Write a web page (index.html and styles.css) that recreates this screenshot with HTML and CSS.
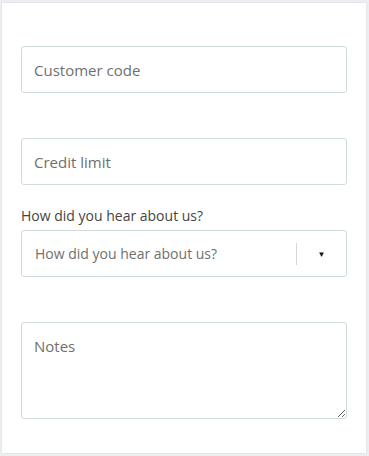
FILE: index.html
```html
<!DOCTYPE html>
<html lang="en">
<head>
    <meta charset="UTF-8">
    <meta name="viewport" content="width=device-width, initial-scale=1.0">
    <title>Customer form</title>
    <link rel="stylesheet" href="styles.css">
</head>
<body>
    <div class="card">
        <form class="customer-form">
            <div class="form-group">
                <label class="form-label" for="code"></label>
                <input class="form-control" type="text" id="code" placeholder="Customer code">
            </div>

            <div class="form-group">
                <label class="form-label" for="limit"></label>
                <input class="form-control" type="text" id="limit" placeholder="Credit limit">
            </div>

            <div class="form-group">
                <label class="form-label" for="source">How did you hear about us?</label>
                <div class="select" id="source">
                    <span class="select-value">How did you hear about us?</span>
                    <span class="select-sep"></span>
                    <span class="select-arrow">&#9660;</span>
                </div>
            </div>

            <div class="form-group">
                <label class="form-label" for="notes"></label>
                <textarea class="form-control notes" id="notes" placeholder="Notes"></textarea>
            </div>
        </form>
    </div>
</body>
</html>
```

FILE: styles.css
```css
body {
    margin: 0;
    padding: 2px 2px 2px 1px;
    background: #eceef1;
    font-family: 'Open Sans', sans-serif;
}

.card {
    background: #fff;
    border: 1px solid #e4e7ea;
    border-radius: 2px;
    padding: 19px 19px 14px 19px;
    height: 452px;
    box-sizing: border-box;
}

.form-group {
    margin-bottom: 21px;
}

.form-label {
    display: block;
    height: 20px;
    margin-bottom: 4px;
    font-size: 14px;
    line-height: 20px;
    color: #444;
}

.form-control {
    display: block;
    width: 100%;
    height: 47px;
    box-sizing: border-box;
    padding: 0 12px;
    border: 1px solid #cfdbdb;
    border-radius: 3px;
    font-family: 'Open Sans', sans-serif;
    font-size: 15px;
    color: #333;
    background: #fff;
}

.form-control::placeholder {
    color: #6f6f6f;
}

.notes {
    height: 97px;
    padding: 13px 12px;
    resize: vertical;
}

.select {
    display: flex;
    align-items: center;
    height: 47px;
    box-sizing: border-box;
    border: 1px solid #cfdbdb;
    border-radius: 3px;
    padding-left: 13px;
    font-size: 14px;
    color: #6f6f6f;
}

.select-value {
    flex: 1;
}

.select-sep {
    width: 1px;
    height: 22px;
    background: #d6d6d6;
}

.select-arrow {
    width: 49px;
    text-align: center;
    font-size: 8px;
    color: #111;
}
```
